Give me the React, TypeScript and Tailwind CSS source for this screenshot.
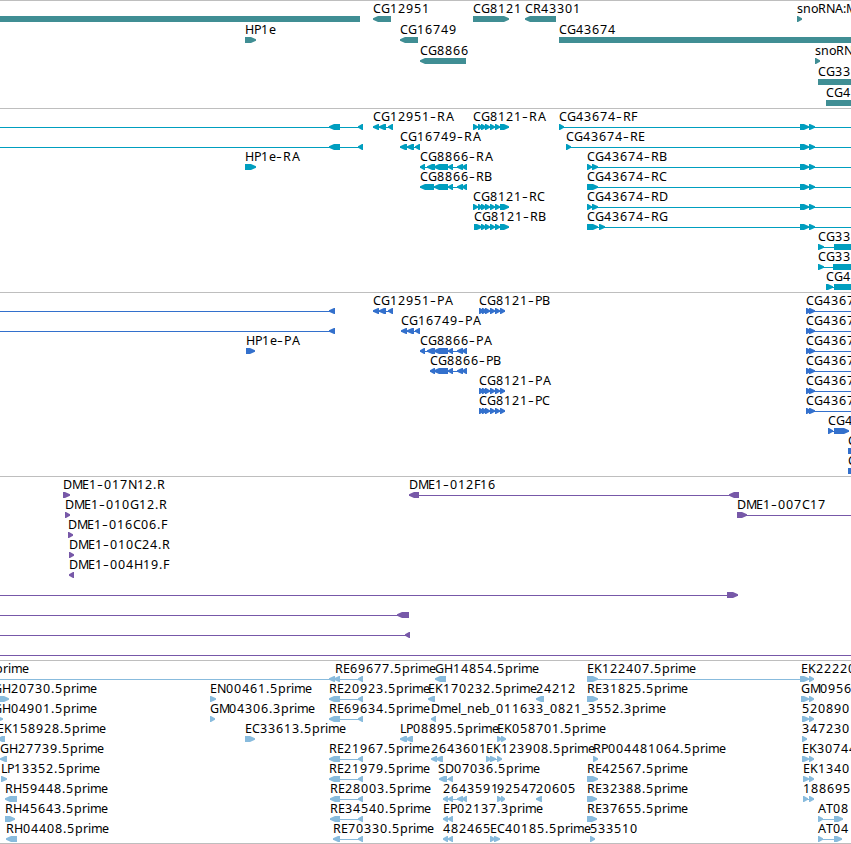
type Segment = [start: number, end: number, kind: "<" | ">" | "="];
type Label = [x: number, text: string];
type Line = [start: number, end: number];

interface Row {
  labels?: Label[];
  lines?: Line[];
  segments?: Segment[];
}

interface Track {
  name: string;
  color: string;
  panel: string;
  row: string;
  rows: Row[];
}

const EDGE = 860;

/* Whole-pixel advances keep the labels crisp at this small size. */
const ADVANCE: Record<string, number> = {
  A: 8, C: 8, D: 9, E: 7, F: 6, G: 9, H: 9, K: 8, L: 6, M: 10, N: 9, P: 7, R: 8, S: 7, T: 7,
  b: 8, e: 7, i: 3, l: 3, m: 11, n: 8, o: 7, p: 8, r: 5, s: 6,
  ".": 4, ":": 3, "-": 7, _: 6,
};

const glyphPositions = (x: number, text: string) => {
  const positions: number[] = [];
  let cursor = x;
  for (const char of text) {
    positions.push(cursor);
    cursor += ADVANCE[char] ?? 8;
  }
  /* A closing "A" sits one pixel clear of the letter before it. */
  if (/-[RP]A$/.test(text)) positions[positions.length - 1] += 1;
  return positions;
};

const rev = (...pairs: number[][]): Segment[] => pairs.map(([a, b]) => [a, b, "<"]);
const fwd = (...pairs: number[][]): Segment[] => pairs.map(([a, b]) => [a, b, ">"]);
const box = (a: number, b: number): Segment => [a, b, "="];

const cg12951 = rev([373, 379], [379, 386], [388, 393]);
const cg8121R = fwd([473, 478], [478, 482], [481, 486], [485, 490], [490, 495], [495, 500], [500, 509]);
const cg8121P = fwd([479, 484], [482, 487], [485, 490], [490, 495], [495, 500], [500, 505]);
const cg8866Tail = rev([448, 453], [457, 463], [462, 467]);
const cg43674 = fwd([800, 809], [809, 815]);
const cg4367P = fwd([806, 811], [809, 815]);
const reTail: Segment = [358, 363, "<"];

const tracks: Track[] = [
  {
    name: "Genes",
    color: "#408e94",
    panel: "h-[108px]",
    row: "h-[21px]",
    rows: [
      {
        labels: [[373, "CG12951"], [473, "CG8121"], [525, "CR43301"], [797, "snoRNA:M"]],
        segments: [box(-10, 360), ...rev([373, 391], [525, 556]), ...fwd([473, 509], [797, 802])],
      },
      {
        labels: [[245, "HP1e"], [400, "CG16749"], [559, "CG43674"]],
        segments: [...fwd([245, 256]), ...rev([400, 418]), box(559, EDGE)],
      },
      {
        labels: [[420, "CG8866"], [815, "snoRN"]],
        segments: [...rev([420, 466]), ...fwd([815, 820])],
      },
      { labels: [[818, "CG33"]], segments: [box(818, EDGE)] },
      { labels: [[826, "CG4"]], segments: [box(826, EDGE)] },
    ],
  },
  {
    name: "Transcripts",
    color: "#009ebf",
    panel: "h-[184px]",
    row: "h-5",
    rows: [
      {
        labels: [[373, "CG12951-RA"], [473, "CG8121-RA"], [559, "CG43674-RF"]],
        lines: [[0, 363], [373, 393], [473, 509], [559, EDGE]],
        segments: [...rev([329, 340], [358, 363]), ...cg12951, ...cg8121R, ...fwd([559, 564]), ...cg43674],
      },
      {
        labels: [[400, "CG16749-RA"], [566, "CG43674-RE"]],
        lines: [[0, 363], [400, 420], [566, EDGE]],
        segments: [
          ...rev([329, 340], [358, 363], [400, 407], [407, 414], [415, 420]),
          ...fwd([566, 571]),
          ...cg43674,
        ],
      },
      {
        labels: [[245, "HP1e-RA"], [420, "CG8866-RA"], [587, "CG43674-RB"]],
        lines: [[420, 467], [587, EDGE]],
        segments: [
          ...fwd([245, 256], [587, 592], [592, 598]),
          ...rev([420, 425], [427, 435], [434, 448]),
          ...cg8866Tail,
          ...cg43674,
        ],
      },
      {
        labels: [[420, "CG8866-RB"], [587, "CG43674-RC"]],
        lines: [[420, 467], [587, EDGE]],
        segments: [...rev([420, 434], [434, 448]), ...cg8866Tail, ...fwd([587, 598]), ...cg43674],
      },
      {
        labels: [[473, "CG8121-RC"], [587, "CG43674-RD"]],
        lines: [[473, 509], [587, EDGE]],
        segments: [...cg8121R, ...fwd([587, 592], [592, 598]), ...cg43674],
      },
      {
        labels: [[474, "CG8121-RB"], [587, "CG43674-RG"]],
        lines: [[474, 509], [587, EDGE]],
        segments: [...fwd([474, 482]), ...cg8121R.slice(2), ...fwd([587, 598], [599, 605]), ...cg43674],
      },
      { labels: [[818, "CG33"]], lines: [[818, EDGE]], segments: [...fwd([818, 824]), box(834, EDGE)] },
      { labels: [[818, "CG33"]], lines: [[818, EDGE]], segments: [...fwd([818, 824]), box(833, EDGE)] },
      { labels: [[826, "CG4"]], lines: [[826, EDGE]], segments: [...fwd([826, 833]), box(834, EDGE)] },
    ],
  },
  {
    name: "Proteins",
    color: "#3370cc",
    panel: "h-[184px]",
    row: "h-5",
    rows: [
      {
        labels: [[373, "CG12951-PA"], [479, "CG8121-PB"], [806, "CG4367"]],
        lines: [[0, 335], [373, 393], [479, 505], [806, EDGE]],
        segments: [...rev([329, 335]), ...cg12951, ...cg8121P, ...cg4367P],
      },
      {
        labels: [[401, "CG16749-PA"], [806, "CG4367"]],
        lines: [[0, 335], [401, 420], [806, EDGE]],
        segments: [...rev([329, 335], [401, 407], [407, 414], [415, 420]), ...cg4367P],
      },
      {
        labels: [[246, "HP1e-PA"], [420, "CG8866-PA"], [806, "CG4367"]],
        lines: [[420, 467], [806, EDGE]],
        segments: [
          ...fwd([246, 255]),
          ...rev([420, 425], [427, 435], [434, 448]),
          ...cg8866Tail,
          ...cg4367P,
        ],
      },
      {
        labels: [[430, "CG8866-PB"], [806, "CG4367"]],
        lines: [[430, 467], [806, EDGE]],
        segments: [...rev([430, 435], [434, 448]), ...cg8866Tail, ...cg4367P],
      },
      {
        labels: [[479, "CG8121-PA"], [806, "CG4367"]],
        lines: [[479, 505], [806, EDGE]],
        segments: [...cg8121P, ...cg4367P],
      },
      {
        labels: [[479, "CG8121-PC"], [806, "CG4367"]],
        lines: [[479, 505], [806, EDGE]],
        segments: [...cg8121P, ...cg4367P],
      },
      { labels: [[828, "CG4"]], lines: [[828, 849]], segments: fwd([828, 833], [834, 849]) },
      { labels: [[848, "C"]], segments: fwd([848, 857]) },
      { labels: [[848, "C"]], segments: fwd([848, 857]) },
    ],
  },
  {
    name: "BACs",
    color: "#7758a8",
    panel: "h-[184px]",
    row: "h-5",
    rows: [
      {
        labels: [[63, "DME1-017N12.R"], [409, "DME1-012F16"]],
        lines: [[409, 739]],
        segments: [...fwd([63, 70]), ...rev([409, 419], [729, 739])],
      },
      {
        labels: [[65, "DME1-010G12.R"], [737, "DME1-007C17"]],
        lines: [[737, EDGE]],
        segments: fwd([65, 70], [737, 747]),
      },
      { labels: [[68, "DME1-016C06.F"]], segments: fwd([68, 73]) },
      { labels: [[69, "DME1-010C24.R"]], segments: fwd([69, 74]) },
      { labels: [[69, "DME1-004H19.F"]], segments: rev([69, 74]) },
      { lines: [[0, 738]], segments: fwd([727, 738]) },
      { lines: [[0, 409]], segments: rev([397, 409]) },
      { lines: [[0, 410]], segments: rev([405, 410]) },
      { lines: [[0, EDGE]] },
    ],
  },
  {
    name: "ESTs",
    color: "#88bbdd",
    panel: "h-[184px]",
    row: "h-5",
    rows: [
      {
        labels: [
          [-5, "prime"],
          [335, "RE69677.5prime"],
          [435, "GH14854.5prime"],
          [587, "EK122407.5prime"],
          [801, "EK22220"],
        ],
        lines: [[0, 363], [587, 814]],
        segments: [
          ...rev([329, 335], [334, 340], [358, 363], [435, 446]),
          ...fwd([587, 598], [800, 809], [809, 814]),
        ],
      },
      {
        labels: [
          [-7, "GH20730.5prime"],
          [210, "EN00461.5prime"],
          [329, "RE20923.5prime"],
          [428, "EK170232.5prime"],
          [536, "24212"],
          [587, "RE31825.5prime"],
          [801, "GM0956"],
        ],
        lines: [[329, 363]],
        segments: [
          ...fwd([-5, 9], [210, 216], [587, 598], [801, 809], [809, 814]),
          ...rev([329, 340], [428, 435], [536, 544]),
          reTail,
        ],
      },
      {
        labels: [
          [-7, "GH04901.5prime"],
          [210, "GM04306.3prime"],
          [329, "RE69634.5prime"],
          [431, "Dmel_neb_011633_0821_3552.3prime"],
          [802, "520890"],
        ],
        lines: [[329, 363]],
        segments: [
          ...fwd([-5, 3], [210, 215], [802, 809], [809, 814]),
          ...rev([329, 340], [431, 436]),
          reTail,
        ],
      },
      {
        labels: [
          [-3, "EK158928.5prime"],
          [245, "EC33613.5prime"],
          [400, "LP08895.5prime"],
          [497, "EK058701.5prime"],
          [802, "347230"],
        ],
        segments: [
          ...rev([-3, 5], [400, 407], [406, 413]),
          ...fwd([245, 255], [497, 502], [501, 506], [802, 807]),
        ],
      },
      {
        labels: [
          [0, "GH27739.5prime"],
          [329, "RE21967.5prime"],
          [431, "2643601"],
          [486, "EK123908.5prime"],
          [593, "RP004481064.5prime"],
          [802, "EK30744"],
        ],
        lines: [[329, 363], [486, 502]],
        segments: [
          ...rev([0, 7], [329, 340], [431, 437], [436, 443]),
          reTail,
          ...fwd([486, 491], [490, 496], [497, 502], [593, 598], [802, 809], [809, 814]),
        ],
      },
      {
        labels: [
          [1, "LP13352.5prime"],
          [329, "RE21979.5prime"],
          [438, "SD07036.5prime"],
          [587, "RE42567.5prime"],
          [803, "EK1340"],
        ],
        lines: [[329, 363], [439, 453]],
        segments: [
          ...fwd([1, 7], [587, 598], [803, 809], [809, 814]),
          ...rev([329, 340], [439, 447], [448, 453]),
          reTail,
        ],
      },
      {
        labels: [
          [5, "RH59448.5prime"],
          [330, "RE28003.5prime"],
          [443, "2643591"],
          [497, "92547"],
          [536, "20605"],
          [587, "RE32388.5prime"],
          [803, "188695"],
        ],
        lines: [[330, 363], [443, 467], [803, 814]],
        segments: [
          ...rev([5, 17], [330, 340], [443, 448], [448, 453], [457, 463], [462, 467], [536, 542]),
          reTail,
          ...fwd([497, 502], [501, 505], [587, 597], [803, 808], [809, 814]),
        ],
      },
      {
        labels: [
          [5, "RH45643.5prime"],
          [330, "RE34540.5prime"],
          [443, "EP02137.3prime"],
          [587, "RE37655.5prime"],
          [818, "AT08"],
        ],
        lines: [[330, 363], [818, 843]],
        segments: [
          ...fwd([5, 15], [587, 597], [818, 823], [834, 843]),
          ...rev([330, 340], [443, 448], [448, 453]),
          reTail,
        ],
      },
      {
        labels: [
          [6, "RH04408.5prime"],
          [333, "RE70330.5prime"],
          [443, "482465"],
          [490, "EC40185.5prime"],
          [590, "533510"],
          [818, "AT04"],
        ],
        lines: [[333, 363], [818, 842]],
        segments: [
          ...rev([6, 17], [333, 340], [443, 448], [448, 453]),
          reTail,
          ...fwd([490, 495], [494, 500], [590, 595], [818, 823], [834, 842]),
        ],
      },
    ],
  },
];

function FeatureShape({ segment: [a, b, kind] }: { segment: Segment }) {
  if (kind === "=") return <rect x={a} y={15} width={b - a} height={6} />;
  const tip = Math.min(5, b - a - 1);
  const points =
    kind === ">"
      ? `${a},15 ${b - tip},15 ${b},17.2 ${b},18.8 ${b - tip},21 ${a},21`
      : `${b},15 ${a + tip},15 ${a},17.2 ${a},18.8 ${a + tip},21 ${b},21`;
  return <polygon points={points} />;
}

function FeatureLabel({ label: [x, text] }: { label: Label }) {
  const positions = glyphPositions(x, text);
  const dash = text.indexOf("-");
  if (dash < 0) {
    return (
      <text x={positions.join(" ")} y={12} fill="#000">
        {text}
      </text>
    );
  }
  return (
    <text y={12} fill="#000">
      <tspan x={positions.slice(0, dash).join(" ")}>{text.slice(0, dash)}</tspan>
      <tspan x={positions[dash]} y={13} className="text-[18px] font-light">
        -
      </tspan>
      <tspan x={positions.slice(dash + 1).join(" ")} y={12}>
        {text.slice(dash + 1)}
      </tspan>
    </text>
  );
}

function FeatureRow({ row, color, size }: { row: Row; color: string; size: string }) {
  return (
    <svg className={`block w-full shrink-0 overflow-visible ${size}`} fill={color}>
      {row.lines?.map(([a, b]) => (
        <rect key={a} x={a} y={18} width={b - a} height={1} />
      ))}
      {row.segments?.map((segment, i) => (
        <FeatureShape key={i} segment={segment} />
      ))}
      {row.labels?.map((label) => (
        <FeatureLabel key={label[0]} label={label} />
      ))}
    </svg>
  );
}

export default function App() {
  return (
    <main className="flex h-[844px] w-[851px] flex-col overflow-hidden border-b border-[#bebebe] bg-white font-['Noto_Sans','DejaVu_Sans',sans-serif] text-[12.5px]">
      {tracks.map((track) => (
        <section
          key={track.name}
          className={`flex shrink-0 flex-col border-t border-[#bebebe] ${track.panel}`}
        >
          {track.rows.map((row, i) => (
            <FeatureRow key={i} row={row} color={track.color} size={track.row} />
          ))}
        </section>
      ))}
    </main>
  );
}
